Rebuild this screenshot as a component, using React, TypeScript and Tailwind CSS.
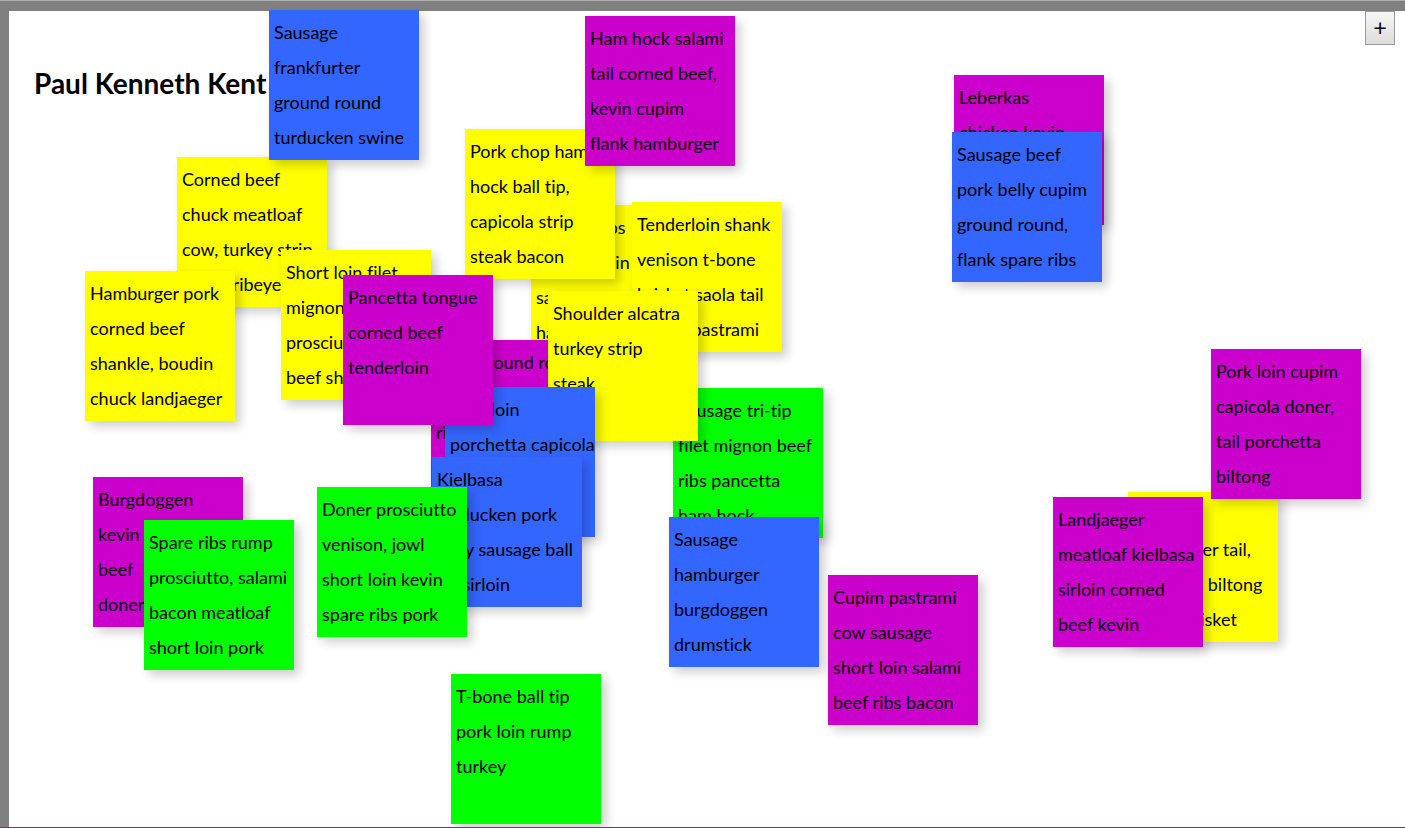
type Note = { place: string; color: string; text: string };

const YELLOW = "bg-[#ffff00]";
const PURPLE = "bg-[#cc00cc]";
const BLUE = "bg-[#3366ff]";
const GREEN = "bg-[#00ff00]";

// Ordered from the bottom of the pile to the top.
const notes: Note[] = [
  { place: "left-[177px] top-[157px]", color: YELLOW, text: "Corned beef\nchuck meatloaf\ncow, turkey strip\nshank ribeye" },
  { place: "left-[531px] top-[205px]", color: YELLOW, text: "Boudin ribs\nkevin sirloin\nsalami strip\nhamburger" },
  { place: "left-[632px] top-[202px]", color: YELLOW, text: "Tenderloin shank\nvenison t-bone\nbrisket saola tail\nturkey pastrami" },
  { place: "left-[431px] top-[340px]", color: PURPLE, text: "Ham ground round\n\nribs" },
  { place: "left-[673px] top-[388px]", color: GREEN, text: "Sausage tri-tip\nfilet mignon beef\nribs pancetta\nham hock" },
  { place: "left-[548px] top-[291px]", color: YELLOW, text: "Shoulder alcatra\nturkey strip\nsteak" },
  { place: "left-[445px] top-[387px]", color: BLUE, text: "Pork loin\nporchetta capicola" },
  { place: "left-[432px] top-[457px]", color: BLUE, text: "Kielbasa\nturducken pork\nbelly sausage ball\ntip sirloin" },
  { place: "left-[465px] top-[129px]", color: YELLOW, text: "Pork chop ham\nhock ball tip,\ncapicola strip\nsteak bacon" },
  { place: "left-[585px] top-[16px]", color: PURPLE, text: "Ham hock salami\ntail corned beef,\nkevin cupim\nflank hamburger" },
  { place: "left-[269px] top-[10px]", color: BLUE, text: "Sausage\nfrankfurter\nground round\nturducken swine" },
  { place: "left-[281px] top-[250px]", color: YELLOW, text: "Short loin filet\nmignon\nprosciutto\nbeef shank" },
  { place: "left-[85px] top-[271px]", color: YELLOW, text: "Hamburger pork\ncorned beef\nshankle, boudin\nchuck landjaeger" },
  { place: "left-[343px] top-[275px]", color: PURPLE, text: "Pancetta tongue\ncorned beef\ntenderloin" },
  { place: "left-[93px] top-[477px]", color: PURPLE, text: "Burgdoggen\nkevin\nbeef\ndoner" },
  { place: "left-[144px] top-[520px]", color: GREEN, text: "Spare ribs rump\nprosciutto, salami\nbacon meatloaf\nshort loin pork" },
  { place: "left-[317px] top-[487px]", color: GREEN, text: "Doner prosciutto\nvenison, jowl\nshort loin kevin\nspare ribs pork" },
  { place: "left-[669px] top-[517px]", color: BLUE, text: "Sausage\nhamburger\nburgdoggen\ndrumstick" },
  { place: "left-[828px] top-[575px]", color: PURPLE, text: "Cupim pastrami\ncow sausage\nshort loin salami\nbeef ribs bacon" },
  { place: "left-[451px] top-[674px]", color: GREEN, text: "T-bone ball tip\npork loin rump\nturkey" },
  { place: "left-[954px] top-[75px]", color: PURPLE, text: "Leberkas\nchicken kevin" },
  { place: "left-[952px] top-[132px]", color: BLUE, text: "Sausage beef\npork belly cupim\nground round,\nflank spare ribs" },
  { place: "left-[1128px] top-[492px]", color: YELLOW, text: "\nhamburger tail,\nball hock biltong\nshank brisket" },
  { place: "left-[1211px] top-[349px]", color: PURPLE, text: "Pork loin cupim\ncapicola doner,\ntail porchetta\nbiltong" },
  { place: "left-[1053px] top-[497px]", color: PURPLE, text: "Landjaeger\nmeatloaf kielbasa\nsirloin corned\nbeef kevin" },
];

function StickyNote({ place, color, text }: Note) {
  return (
    <article
      className={`absolute size-[150px] p-[5px] shadow-[5px_5px_10px_rgba(0,0,0,0.2)] ${place} ${color}`}
    >
      <p className="whitespace-pre text-[18px] leading-[35px]">{text}</p>
    </article>
  );
}

export default function App() {
  return (
    <div className="relative flex min-h-screen flex-col overflow-hidden border-t border-b border-t-[#b0b0b0] border-b-[#5a4560] bg-[#808080] pt-[10px] pl-[9px] font-['Lato',sans-serif] text-black [font-variant-ligatures:none]">
      <main className="flex grow items-start justify-between bg-white pr-[10px] pl-[25px]">
        <h1 className="pt-[52px] text-[28px] leading-[40px] font-bold">Paul Kenneth Kent</h1>
        <button
          type="button"
          aria-label="Add note"
          className="flex h-[34px] w-[30px] justify-center border border-[#999999] bg-linear-to-b from-[#f6f6f6] to-[#dddddd] font-['Open_Sans',sans-serif] text-[24px] leading-[32px] font-medium"
        >
          +
        </button>
      </main>
      <section aria-label="Notes" className="absolute -top-px left-0">
        {notes.map((note) => (
          <StickyNote key={note.place} {...note} />
        ))}
      </section>
    </div>
  );
}
